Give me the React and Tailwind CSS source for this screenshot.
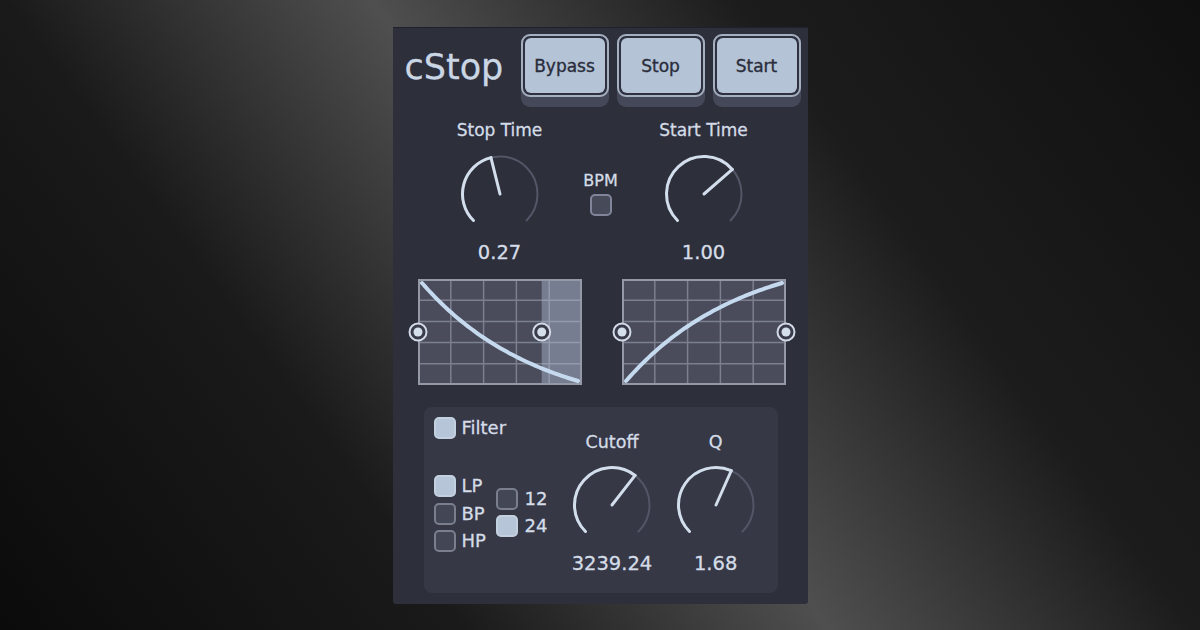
import React from "react";

function Knob({ angle }) {
  const cx = 42, cy = 42, r = 37.5;
  const p = (a, rr = r) => {
    const t = (a * Math.PI) / 180;
    return [cx + rr * Math.sin(t), cy - rr * Math.cos(t)];
  };
  const arc = (a1, a2) => {
    const [x1, y1] = p(a1);
    const [x2, y2] = p(a2);
    const large = a2 - a1 > 180 ? 1 : 0;
    return `M${x1} ${y1} A${r} ${r} 0 ${large} 1 ${x2} ${y2}`;
  };
  const [px, py] = p(angle, r);
  return (
    <svg width="84" height="84" viewBox="0 0 84 84" className="block">
      <path d={arc(-135, 135)} stroke="#535666" strokeWidth="2" fill="none" strokeLinecap="round" />
      <path d={arc(-135, angle)} stroke="#d3deec" strokeWidth="3" fill="none" strokeLinecap="round" />
      <line x1={cx} y1={cy} x2={px} y2={py} stroke="#d3deec" strokeWidth="3" strokeLinecap="round" />
    </svg>
  );
}

function Graph({ dir, handles, shade }) {
  const W = 164, H = 106, k = 1.35;
  const pts = [];
  for (let i = 0; i <= 48; i++) {
    const u = i / 48;
    const f = (1 - Math.exp(-k * u)) / (1 - Math.exp(-k));
    const x = 4 + 156 * u;
    const y = dir === "down" ? 4 + 98 * f : 102 - 98 * f;
    pts.push(`${x.toFixed(2)},${y.toFixed(2)}`);
  }
  const cols = [1, 2, 3, 4].map((i) => (W / 5) * i);
  const rows = [1, 2, 3, 4].map((i) => (H / 5) * i);
  return (
    <svg width={W} height={H} viewBox={`0 0 ${W} ${H}`} className="block overflow-visible">
      <rect x="1" y="1" width={W - 2} height={H - 2} fill="#4a4c5c" />
      {cols.map((x) => (
        <line key={"c" + x} x1={x} y1="1" x2={x} y2={H - 1} stroke="#7c7f8e" strokeWidth="1.5" />
      ))}
      {rows.map((y) => (
        <line key={"r" + y} x1="1" y1={y} x2={W - 1} y2={y} stroke="#7c7f8e" strokeWidth="1.5" />
      ))}
      {shade != null && (
        <rect x={shade} y="1" width={W - 1 - shade} height={H - 2} fill="#b4c2d8" fillOpacity="0.42" />
      )}
      <rect x="1" y="1" width={W - 2} height={H - 2} fill="none" stroke="#9499a8" strokeWidth="2" />
      <polyline points={pts.join(" ")} fill="none" stroke="#c6daef" strokeWidth="4" strokeLinecap="round" strokeLinejoin="round" />
      {handles.map((hx) => (
        <g key={hx}>
          <circle cx={hx} cy="53" r="8.5" fill="#393b4a" stroke="#d2dae6" strokeWidth="2" />
          <circle cx={hx} cy="53" r="4.5" fill="#d5dfea" />
        </g>
      ))}
    </svg>
  );
}

function Box({ on }) {
  return on ? (
    <div className="w-[22px] h-[22px] rounded-[5px] bg-[#b6c5d8] border-2 border-[#c3d0e0] shrink-0" />
  ) : (
    <div className="w-[22px] h-[22px] rounded-[5px] bg-[#434654] border-2 border-[#7a7f8d] shrink-0" />
  );
}

function Btn({ label }) {
  return (
    <div className="w-[88px] h-[73px] rounded-[9px] bg-[#454858]">
      <div className="h-[63px] rounded-[9px] border-2 border-[#a4afc0] bg-[#2f3140] p-[2px]">
        <div className="h-full rounded-[6px] bg-[#b4c3d6] flex items-center justify-center pt-[2px] text-[17px] text-[#2a2d3b] [-webkit-text-stroke:0.35px_#2a2d3b]">
          {label}
        </div>
      </div>
    </div>
  );
}

export default function App() {
  return (
    <div className="w-[1200px] h-[630px] overflow-hidden flex justify-center pt-[27px] bg-[linear-gradient(54deg,#0b0b0b_0%,#1a1a1a_28%,#4f4f4f_50%,#1c1c1c_72%,#101010_100%)] font-['DejaVu_Sans','Liberation_Sans',sans-serif]">
      <div className="w-[415px] h-[577px] bg-[#2d2f3b] border-t border-[#1f2028] rounded-b-[3px] flex flex-col">
        {/* header */}
        <div className="flex pt-[6px] pl-[12px] pr-[7px]">
          <div className="mt-[16px] text-[35px] leading-[35px] text-[#cbd6e4] [-webkit-text-stroke:0.3px_#cbd6e4]">cStop</div>
          <div className="ml-auto flex gap-[8px]">
            <Btn label="Bypass" />
            <Btn label="Stop" />
            <Btn label="Start" />
          </div>
        </div>

        {/* time knobs */}
        <div className="flex mt-[13px] pl-[47px] text-[#d4dce7] [-webkit-text-stroke:0.3px_#d4dce7]">
          <div className="w-[120px] flex flex-col items-center">
            <div className="text-[17px] leading-[20px]">Stop Time</div>
            <div className="mt-[12px]"><Knob angle={-14} /></div>
            <div className="mt-[5px] text-[19.5px] leading-[24px]">0.27</div>
          </div>
          <div className="w-[82px] flex flex-col items-center pt-[51px]">
            <div className="text-[16px] leading-[20px]">BPM</div>
            <div className="mt-[3px] w-[22px] h-[22px] rounded-[5px] bg-[#474a59] border-2 border-[#80859a]" />
          </div>
          <div className="w-[124px] flex flex-col items-center">
            <div className="text-[17px] leading-[20px]">Start Time</div>
            <div className="mt-[12px]"><Knob angle={49} /></div>
            <div className="mt-[5px] text-[19.5px] leading-[24px]">1.00</div>
          </div>
        </div>

        {/* graphs */}
        <div className="flex mt-[14px] pl-[25px] gap-[40px]">
          <Graph dir="down" handles={[0, 123.7]} shade={123.7} />
          <Graph dir="up" handles={[0, 164]} />
        </div>

        {/* filter */}
        <div className="mt-[22px] ml-[31px] w-[354px] h-[186px] rounded-[8px] bg-[#363846] p-[10px] flex text-[#d4dce7] [-webkit-text-stroke:0.3px_#d4dce7]">
          <div className="w-[127px]">
            <div className="flex items-center gap-[6px] h-[22px]">
              <Box on />
              <span className="text-[18px] leading-[22px]">Filter</span>
            </div>
            <div className="flex mt-[36px]">
              <div className="w-[62px] flex flex-col gap-[5.5px]">
                <div className="flex items-center gap-[6px]"><Box on /><span className="text-[18px] leading-[22px]">LP</span></div>
                <div className="flex items-center gap-[6px]"><Box /><span className="text-[18px] leading-[22px]">BP</span></div>
                <div className="flex items-center gap-[6px]"><Box /><span className="text-[18px] leading-[22px]">HP</span></div>
              </div>
              <div className="mt-[13px] flex flex-col gap-[5px]">
                <div className="flex items-center gap-[7px]"><Box /><span className="text-[18px] leading-[22px]">12</span></div>
                <div className="flex items-center gap-[7px]"><Box on /><span className="text-[18px] leading-[22px]">24</span></div>
              </div>
            </div>
          </div>
          <div className="w-[104px] flex flex-col items-center pt-[15px]">
            <div className="text-[17.5px] leading-[20px]">Cutoff</div>
            <div className="mt-[11px]"><Knob angle={38} /></div>
            <div className="mt-[5px] text-[19.5px] leading-[24px]">3239.24</div>
          </div>
          <div className="w-[104px] flex flex-col items-center pt-[15px]">
            <div className="text-[17.5px] leading-[20px]">Q</div>
            <div className="mt-[11px]"><Knob angle={24} /></div>
            <div className="mt-[5px] text-[19.5px] leading-[24px]">1.68</div>
          </div>
        </div>
      </div>
    </div>
  );
}
